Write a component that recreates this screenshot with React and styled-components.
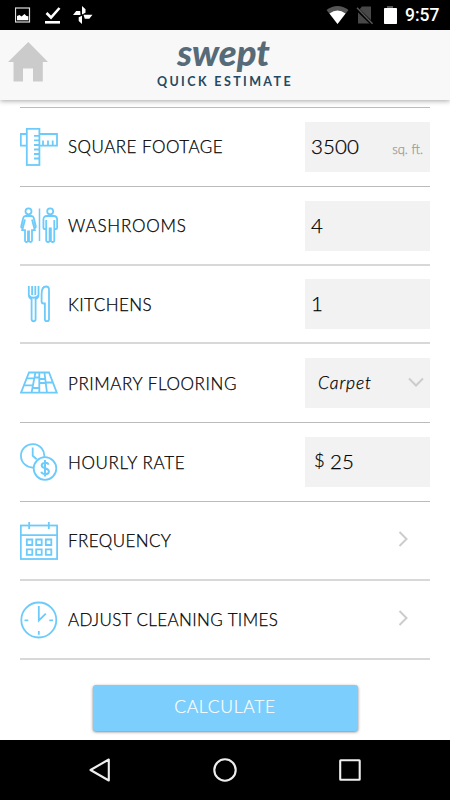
import styled, { createGlobalStyle } from "styled-components";


export default function App() {

    return (

        <>
            <GlobalStyle />
            <StyledScreen>
                <StatusBar />
                <Header />
                <StyledForm>
                    <Row label="SQUARE FOOTAGE" spacing="0.5px" icon={<RulersIcon />}>
                        <StyledField>
                            <StyledValue>3500</StyledValue>
                            <StyledUnit>sq. ft.</StyledUnit>
                        </StyledField>
                    </Row>
                    <Row label="WASHROOMS" spacing="0.8px" icon={<WashroomIcon />}>
                        <StyledField>
                            <StyledValue>4</StyledValue>
                        </StyledField>
                    </Row>
                    <Row soft label="KITCHENS" spacing="0.45px" icon={<CutleryIcon />}>
                        <StyledField>
                            <StyledValue>1</StyledValue>
                        </StyledField>
                    </Row>
                    <Row soft label="PRIMARY FLOORING" spacing="0.58px" icon={<FlooringIcon />}>
                        <StyledField>
                            <StyledOption>Carpet</StyledOption>
                            <Chevron down />
                        </StyledField>
                    </Row>
                    <Row label="HOURLY RATE" spacing="0.65px" icon={<RateIcon />}>
                        <StyledField>
                            <StyledCurrency>$</StyledCurrency>
                            <StyledValue>25</StyledValue>
                        </StyledField>
                    </Row>
                    <Row label="FREQUENCY" spacing="0.42px" icon={<CalendarIcon />}>
                        <Chevron />
                    </Row>
                    <Row soft label="ADJUST CLEANING TIMES" spacing="0.38px" icon={<ClockIcon />}>
                        <Chevron />
                    </Row>
                    <StyledFooter>
                        <StyledButton>CALCULATE</StyledButton>
                    </StyledFooter>
                </StyledForm>
                <NavBar />
            </StyledScreen>
        </>

    )
}

function StatusBar() {

    return (

        <StyledStatusBar>
            <svg width="80" height="18" viewBox="0 0 80 18">
                <rect x="0.5" y="2" width="14" height="14" fill="none" stroke="#ddd" strokeWidth="1.2" />
                <path d="M2 14.3V10l2.500-1 2 1.500 3-2.500 2 2 1.800 .3v4z" fill="#fff" />
                <path d="M31.500 7l4.500 4.500L44.500 2" fill="none" stroke="#fff" strokeWidth="2.600" />
                <rect x="30" y="15" width="15" height="2.600" fill="#fff" />
                <path d="M67 8.500V0l3.500 3.200v3.500zM68.500 8.700h9l-3.200 4h-4.500zM67 9.800V18l-3.300-3v-3.700zM65.500 9H58l3.200-4h4z" fill="#fff" />
            </svg>
            <StyledStatusRight>
                <svg width="76" height="20" viewBox="0 0 76 20">
                    <path d="M.5 5Q11.500-3 22.500 5L11.500 19z" fill="#555" />
                    <path d="M3.500 8.500Q11.500 2.700 19.500 8.500L11.500 19z" fill="#fff" />
                    <path d="M36 1.500h9v17H32V6z" fill="#484848" />
                    <path d="M30 3l16.500 16" stroke="#000" strokeWidth="3.500" />
                    <path d="M31 2.800l15.500 16" stroke="#5a5a5a" strokeWidth="1.500" />
                    <rect x="61" y="1" width="6" height="3" fill="#555" />
                    <rect x="58" y="3" width="13" height="16" rx=".7" fill="#fff" />
                </svg>
                <StyledTime>9:57</StyledTime>
            </StyledStatusRight>
        </StyledStatusBar>

    )
}

function Header() {

    return (

        <StyledHeader>
            <svg width="40" height="40" viewBox="0 0 40 40">
                <path d="M20.300 0L40 20h-5.200v19.500H25V26.500h-10v13H5.500V20H0z" fill="#cbcbcb" />
            </svg>
            <StyledTitles>
                <StyledLogo>swept</StyledLogo>
                <StyledSubtitle>QUICK ESTIMATE</StyledSubtitle>
            </StyledTitles>
        </StyledHeader>

    )
}

function Row({ icon, label, spacing, soft, children }) {

    return (

        <StyledRow $soft={soft}>
            {icon}
            <StyledLabel $spacing={spacing}>{label}</StyledLabel>
            {children}
        </StyledRow>

    )
}

function Chevron({ down }) {

    return (

        <StyledChevron $down={down} viewBox="0 0 16 16">
            <path d="M4.500 1l7 7-7 7" />
        </StyledChevron>

    )
}

function RulersIcon() {

    return (
        <StyledIcon viewBox="0 0 38 38">
            <path d="M6.500 6H.8v11.600h5.700M19.500 6H37v11.600H19.500" />
            <rect x="6.800" y=".8" width="12.600" height="36.200" />
            <path d="M14 7.800h5M14 12.400h5M14 17h5M14 21.500h5M14 26h5M14 30.500h5M23 17.500v-5M28 17.500v-5M32.700 17.500v-5" />
        </StyledIcon>
    )
}

function WashroomIcon() {

    return (
        <StyledIcon viewBox="0 0 38 38">
            <circle cx="8.500" cy="4.300" r="3" />
            <path d="M5.500 9h6c1.500 0 2 1 2.300 2l2 8.500c.2 1.500-1.400 1.700-1.800.5l-2-7.500 2.800 10.700H12V33.500c0 2-3 2-3 0v-9H8v9c0 2-3 2-3 0V23.200H2.200L5 12.500l-2 7.500c-.4 1.200-2 1-1.800-.5l2-8.500C3.500 10 4 9 5.500 9z" />
            <path d="M19.500 1.500v32.500" strokeWidth="1.500" />
            <circle cx="30.200" cy="4.300" r="3" />
            <path d="M27 9h6.500c2.300 0 3.600 1.300 3.600 3.500V21c0 1.500-2.800 1.500-2.800 0v-8V33.500c0 2-3.400 2-3.400 0V21.500h-1.300V33.500c0 2-3.400 2-3.400 0V13v8c0 1.500-2.800 1.500-2.800 0v-8.500C23.400 10.300 24.700 9 27 9z" />
        </StyledIcon>
    )
}

function CutleryIcon() {

    return (
        <StyledIcon viewBox="0 0 38 38">
            <path d="M8.800 1v9c0 2.500 1.300 3.500 2.800 4.200V34c0 3 4 3 4 0V14.200c1.500-.7 2.900-1.700 2.900-4.200V1M12.100 1v9M15.300 1v9M9 10.500c2 3 7.500 3 9.300 0" />
            <path d="M26.900 36.200c-1.300 0-2-.8-2-2V18.500h-1.300c-1.300 0-2-.8-2-2V9c0-4.500 1.500-7.500 4.500-7.500 2 0 2.900 1 2.900 3v29.700c0 1.200-.8 2-2.100 2z" />
        </StyledIcon>
    )
}

function FlooringIcon() {

    return (
        <StyledIcon viewBox="0 0 38 38">
            <path d="M9 8.500h20l7.800 20.200H1zM15.300 9l-3.800 20M19.300 9v20M24.500 9L27 29M14.300 13.500h4.700M19.500 15h5.700M7 14.300h6.300M25.700 18.500h6.800M4.700 21.300h8.200M12.300 24h7M19.800 19h5.700" />
        </StyledIcon>
    )
}

function RateIcon() {

    return (
        <StyledIcon viewBox="0 0 38 38">
            <path d="M13.500 24.500A11.700 11.700 0 1 1 24.300 14M12.700 4.500v8.300l4 3.500" />
            <circle cx="25" cy="25.500" r="11.300" />
            <path d="M28.700 21.700c-1-2.600-7-2.500-7 .7 0 3.600 7.200 2 7.200 6 0 3.500-6.700 3.600-7.600.4M25 17v16.500" strokeWidth="2" />
        </StyledIcon>
    )
}

function CalendarIcon() {

    return (
        <StyledIcon viewBox="0 0 38 38">
            <rect x=".8" y="3.500" width="36.300" height="33.500" />
            <path d="M1 13.200h36M9.200 0v7M28.800 0v7" />
            <path d="M6.800 17.500h5.500v5.500H6.800zM16.200 17.500h5.500v5.500h-5.500zM25.800 17.500h5.500v5.500h-5.500zM6.800 27.300h5.500v5.500H6.800zM16.200 27.300h5.500v5.500h-5.500zM25.800 27.300h5.500v5.500h-5.500z" />
        </StyledIcon>
    )
}

function ClockIcon() {

    return (
        <StyledIcon viewBox="0 0 38 38">
            <circle cx="18.800" cy="19" r="17.500" />
            <path d="M18.800 5v14.500l7-6.800M4.500 19.300h3.800M29.300 19.300H33M18.800 30v3.700" />
        </StyledIcon>
    )
}

function NavBar() {

    return (

        <StyledNavBar>
            <StyledNavIcon viewBox="0 0 26 26">
                <path d="M21.800 2.500v21L3.500 13z" />
            </StyledNavIcon>
            <StyledNavIcon viewBox="0 0 26 26">
                <circle cx="13" cy="13" r="10.700" />
            </StyledNavIcon>
            <StyledNavIcon viewBox="0 0 26 26">
                <rect x="3.200" y="3.200" width="19.500" height="19.500" rx=".5" />
            </StyledNavIcon>
        </StyledNavBar>

    )
}

const GlobalStyle = createGlobalStyle`

    * {
        box-sizing: border-box;
    }

    body {
        margin: 0;
        background-color: white;
        font-family: Lato, 'Open Sans', sans-serif;
    }

    svg {
        display: block;
        flex-shrink: 0;
    }

`

const StyledScreen = styled.div`

    width: 450px;
    height: 800px;
    display: flex;
    flex-direction: column;
    overflow: hidden;
    background-color: white;

`

const StyledStatusBar = styled.div`

    height: 30px;
    flex-shrink: 0;
    display: flex;
    justify-content: space-between;
    align-items: center;
    padding: 0 10px 0 15px;
    background-color: black;
    color: white;

`

const StyledStatusRight = styled.div`

    display: flex;
    align-items: center;

`

const StyledTime = styled.span`

    width: 35px;
    margin-left: 3px;
    font-family: Roboto, sans-serif;
    font-size: 17.5px;
    font-weight: 500;
    line-height: 32px;
    white-space: nowrap;

`

const StyledHeader = styled.div`

    height: 70px;
    flex-shrink: 0;
    display: grid;
    grid-template-columns: 40px 1fr 40px;
    padding: 12px 9px 0 8px;
    background-color: #f8f8f8;
    box-shadow: 0 1px 5px rgba(0, 0, 0, 0.35);

`

const StyledTitles = styled.div`

    display: flex;
    flex-direction: column;
    align-items: center;

`

const StyledLogo = styled.div`

    margin-top: -12px;
    margin-right: 2px;
    color: #566a78;
    font-size: 36.5px;
    font-style: italic;
    font-weight: 900;
    line-height: 44px;

`

const StyledSubtitle = styled.div`

    margin-left: 1px;
    color: #234a62;
    font-size: 12.5px;
    font-weight: 700;
    letter-spacing: 2.4px;
    line-height: 16px;

`

const StyledForm = styled.div`

    flex: 1;
    padding: 7px 20px 0;

`

const StyledRow = styled.div`

    height: ${({ $soft }) => ($soft ? "79.8px" : "78.8px")};
    margin-top: ${({ $soft }) => ($soft ? "-1px" : "0")};
    display: flex;
    align-items: center;
    border-top: ${({ $soft }) => ($soft ? "2px solid #d8d8d8" : "1px solid #bbb")};

`

const StyledIcon = styled.svg`

    width: 38px;
    height: 38px;
    fill: none;
    stroke: #6dcbfb;
    stroke-width: 1.8;

`

const StyledLabel = styled.div`

    flex: 1;
    padding: 1px 0 0 10px;
    color: black;
    font-size: 17px;
    font-weight: 300;
    letter-spacing: ${({ $spacing }) => $spacing};
    line-height: 24px;
    white-space: nowrap;
    -webkit-text-stroke: 0.25px black;

`

const StyledField = styled.div`

    width: 125px;
    height: 50px;
    display: flex;
    align-items: center;
    padding: 0 6px;
    background-color: #f2f2f2;

`

const StyledValue = styled.span`

    flex: 1;
    padding-bottom: 2px;
    color: black;
    font-size: 20.5px;
    font-weight: 300;
    letter-spacing: 0.1px;
    -webkit-text-stroke: 0.25px black;

`

const StyledUnit = styled.span`

    padding: 5px 1px 0 0;
    color: #999;
    font-size: 13px;
    font-weight: 300;
    -webkit-text-stroke: 0.25px #999;

`

const StyledCurrency = styled.span`

    width: 19px;
    padding: 0 0 5px 3px;
    font-size: 18.5px;
    font-weight: 300;
    -webkit-text-stroke: 0.2px black;

`

const StyledOption = styled.span`

    flex: 1;
    padding: 0 0 2px 7px;
    font-size: 17.5px;
    font-style: italic;
    font-weight: 300;
    letter-spacing: 0.9px;
    -webkit-text-stroke: 0.25px black;

`

const StyledChevron = styled.svg`

    width: 16px;
    height: 16px;
    margin: ${({ $down }) => ($down ? "0 0 2px" : "0 19px 3px 0")};
    transform: ${({ $down }) => ($down ? "rotate(90deg)" : "none")};
    fill: none;
    stroke: #ccc;
    stroke-width: 2;

`

const StyledFooter = styled.div`

    display: flex;
    justify-content: center;
    margin-top: -1px;
    padding-top: 25px;
    border-top: 2px solid #d8d8d8;

`

const StyledButton = styled.button`

    width: 265px;
    height: 46px;
    padding: 0 0 3px;
    border: none;
    border-radius: 3px;
    background-color: #7ccefc;
    box-shadow: 0 1px 3px rgba(0, 0, 0, 0.5);
    color: white;
    font-family: inherit;
    font-size: 17.5px;
    font-weight: 300;
    letter-spacing: 0.7px;
    -webkit-text-stroke: 0.2px white;

`

const StyledNavBar = styled.div`

    height: 60px;
    flex-shrink: 0;
    display: flex;
    justify-content: space-between;
    align-items: center;
    padding: 0 87px;
    background-color: black;

`

const StyledNavIcon = styled.svg`

    width: 26px;
    height: 26px;
    fill: none;
    stroke: #eee;
    stroke-width: 2.1;
    stroke-linejoin: round;

`
